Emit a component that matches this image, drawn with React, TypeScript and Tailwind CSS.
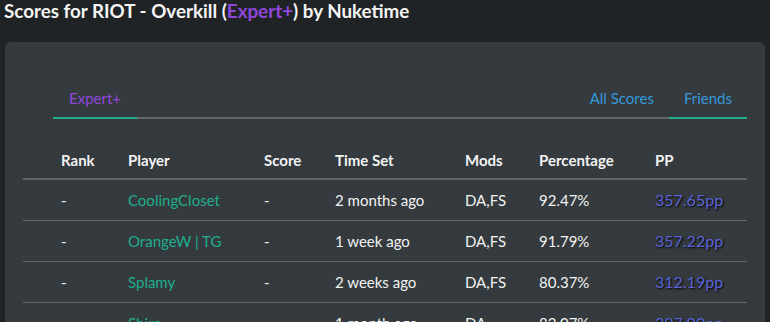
import React from 'react';

const rows = [
  { player: 'CoolingCloset', time: '2 months ago', mods: 'DA,FS', pct: '92.47%', pp: '357.65pp' },
  { player: 'OrangeW | TG', time: '1 week ago', mods: 'DA,FS', pct: '91.79%', pp: '357.22pp' },
  { player: 'Splamy', time: '2 weeks ago', mods: 'DA,FS', pct: '80.37%', pp: '312.19pp' },
  { player: 'Shiro', time: '1 month ago', mods: 'DA', pct: '82.07%', pp: '297.00pp' },
];

const cols = 'grid grid-cols-[67px_136px_71px_130px_74px_116px_1fr] pl-[38px]';

export default function App() {
  return (
    <div className="h-[322px] overflow-hidden bg-[#1f2325] font-['Lato',sans-serif] text-[15px] text-[#f2f2f2]">
      <h1 className="pl-[4px] pt-0 text-[18.8px] font-bold leading-[22px] text-[#f4f4f4]">
        Scores for RIOT - Overkill (<span className="text-[#8f48db]">Expert+</span>) by Nuketime
      </h1>

      <div className="ml-[5px] mr-[5px] mt-[20px] rounded-[6px] bg-[#343a3d] px-[18px] pt-[45px] pb-6">
        {/* tabs */}
        <div className="ml-[30px] flex border-b-2 border-[#5f6768]">
          <div className="-mb-[2px] border-b-2 border-[#1fae8c] px-[16px] pb-[8px] leading-[22px] text-[#8f48db]">
            Expert+
          </div>
          <div className="flex-1" />
          <div className="-mb-[2px] border-b-2 border-transparent px-[15px] pb-[8px] leading-[22px] text-[#3498db]">
            All Scores
          </div>
          <div className="-mb-[2px] border-b-2 border-[#1fae8c] px-[15px] pb-[8px] leading-[22px] text-[#3498db]">
            Friends
          </div>
        </div>

        {/* table */}
        <div className="mt-[30px]">
          <div className={`${cols} border-b-2 border-[#5f6768] pb-[7px] font-bold leading-[22px]`}>
            <div>Rank</div>
            <div>Player</div>
            <div>Score</div>
            <div>Time Set</div>
            <div>Mods</div>
            <div>Percentage</div>
            <div>PP</div>
          </div>
          {rows.map((r) => (
            <div key={r.player} className={`${cols} border-b border-[#5f6768] py-[9px] leading-[22px]`}>
              <div>-</div>
              <div className="text-[#1fae8c]">{r.player}</div>
              <div>-</div>
              <div>{r.time}</div>
              <div>{r.mods}</div>
              <div>{r.pct}</div>
              <div className="text-[16px] text-[#5c64d8] [text-shadow:1px_1px_2px_#000]">{r.pp}</div>
            </div>
          ))}
        </div>
      </div>
    </div>
  );
}
